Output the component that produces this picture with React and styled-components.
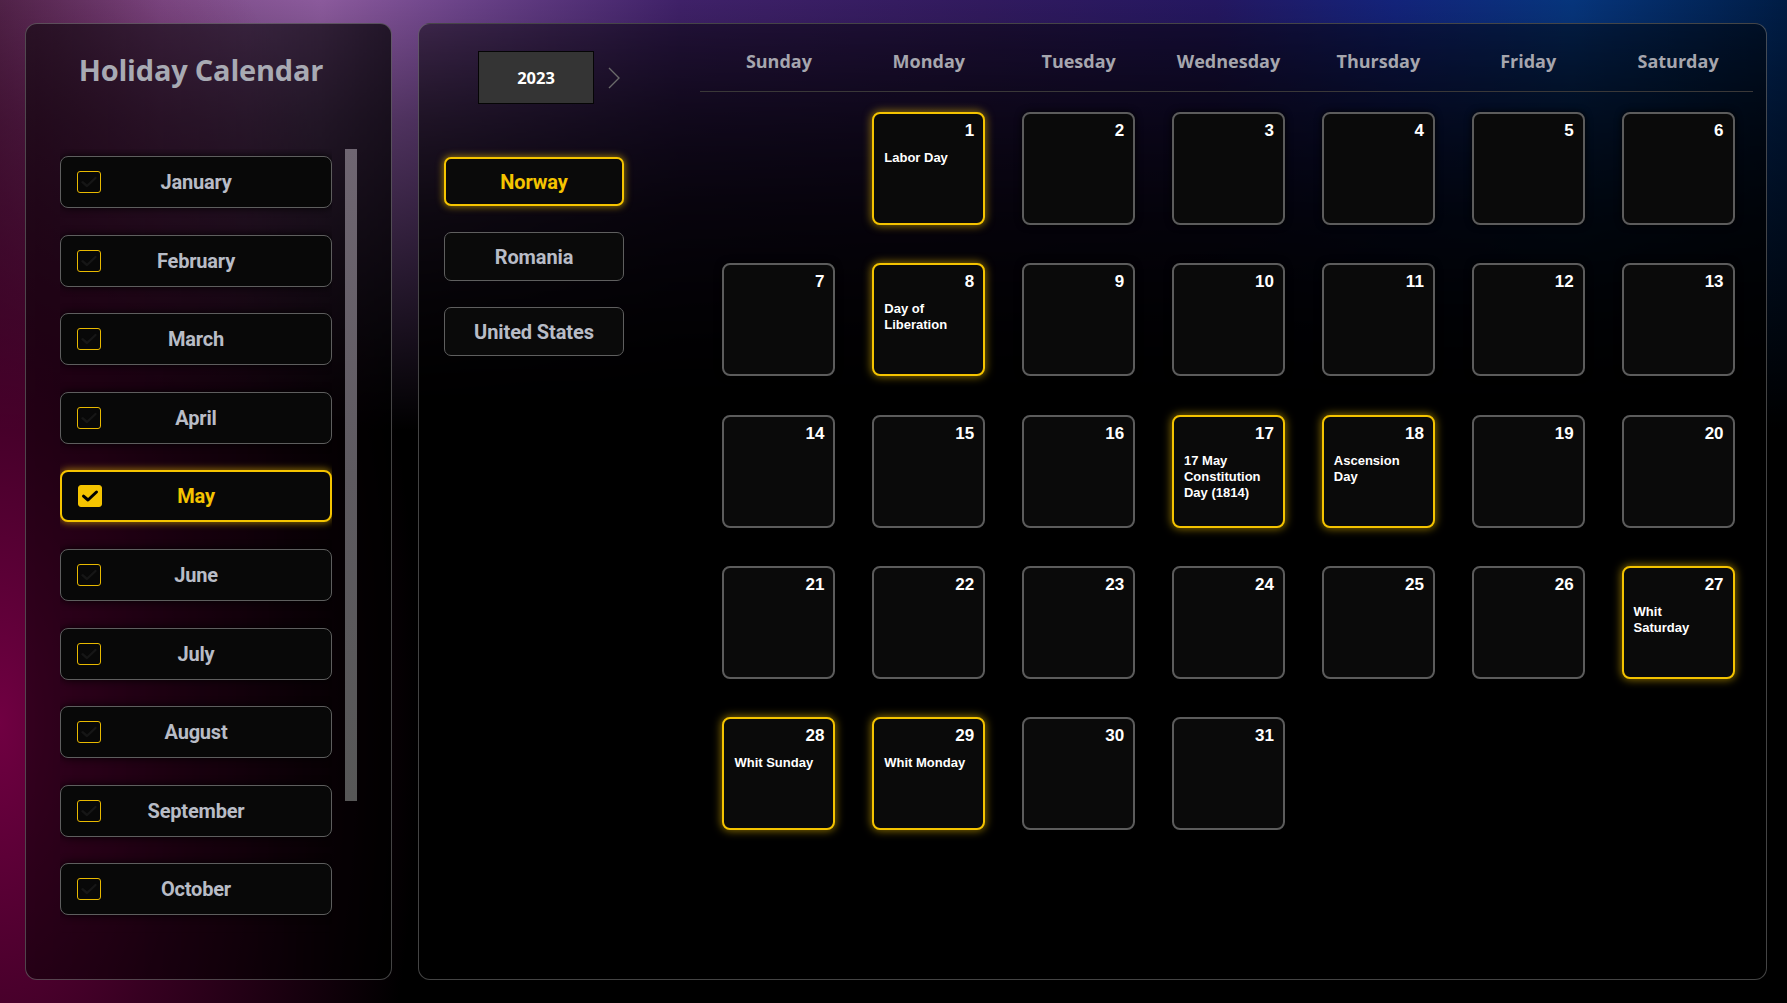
import React from "react";
import styled, { createGlobalStyle, css } from "styled-components";

const MONTHS = [
  "January",
  "February",
  "March",
  "April",
  "May",
  "June",
  "July",
  "August",
  "September",
  "October",
  "November",
  "December",
];

const COUNTRIES = ["Norway", "Romania", "United States"];

const WEEKDAYS = [
  "Sunday",
  "Monday",
  "Tuesday",
  "Wednesday",
  "Thursday",
  "Friday",
  "Saturday",
];

const HOLIDAYS = {
  1: "Labor Day",
  8: "Day of Liberation",
  17: "17 May Constitution Day (1814)",
  18: "Ascension Day",
  27: "Whit Saturday",
  28: "Whit Sunday",
  29: "Whit Monday",
};

// May 2023 starts on a Monday
const FIRST_WEEKDAY = 1;
const DAYS_IN_MONTH = 31;

function CheckMark({ checked }) {
  return (
    <svg width="18" height="14" viewBox="0 0 18 14">
      <path
        d="M2.5 7.2 L7 11 L15.5 3"
        fill="none"
        stroke={checked ? "#000" : "#161616"}
        strokeWidth={checked ? 3 : 2.4}
        strokeLinecap="round"
        strokeLinejoin="round"
      />
    </svg>
  );
}

function App() {
  const cells = [];
  for (let i = 0; i < FIRST_WEEKDAY; i++) cells.push(null);
  for (let d = 1; d <= DAYS_IN_MONTH; d++) cells.push(d);

  return (
    <>
      <GlobalStyle />
      <Page>
        <SidePanel>
          <Title>Holiday Calendar</Title>
          <MonthArea>
            <MonthList>
              {MONTHS.map((m) => {
                const active = m === "May";
                return (
                  <MonthButton key={m} $active={active}>
                    <CheckBox $checked={active}>
                      <CheckMark checked={active} />
                    </CheckBox>
                    <MonthLabel $active={active}>{m}</MonthLabel>
                  </MonthButton>
                );
              })}
            </MonthList>
            <ScrollTrack>
              <ScrollThumb />
            </ScrollTrack>
          </MonthArea>
        </SidePanel>

        <MainPanel>
          <FilterColumn>
            <YearRow>
              <YearBox>2023</YearBox>
              <svg width="14" height="24" viewBox="0 0 14 24">
                <path
                  d="M2 2 L12 12 L2 22"
                  fill="none"
                  stroke="#6b6b6b"
                  strokeWidth="1.4"
                />
              </svg>
            </YearRow>
            <CountryList>
              {COUNTRIES.map((c) => (
                <CountryButton key={c} $active={c === "Norway"}>
                  {c}
                </CountryButton>
              ))}
            </CountryList>
          </FilterColumn>

          <Calendar>
            <WeekHeader>
              {WEEKDAYS.map((w) => (
                <WeekDay key={w}>{w}</WeekDay>
              ))}
            </WeekHeader>
            <DayGrid>
              {cells.map((d, i) =>
                d === null ? (
                  <EmptyCell key={"e" + i} />
                ) : (
                  <DayCell key={d} $holiday={!!HOLIDAYS[d]}>
                    <DayNumber>{d}</DayNumber>
                    {HOLIDAYS[d] && <HolidayName>{HOLIDAYS[d]}</HolidayName>}
                  </DayCell>
                )
              )}
            </DayGrid>
          </Calendar>
        </MainPanel>
      </Page>
    </>
  );
}

//============================== Styles ======================================//

const GlobalStyle = createGlobalStyle`
  html, body {
    margin: 0;
    padding: 0;
    background: #000;
  }
  * {
    box-sizing: border-box;
  }
`;

const Page = styled.div`
  width: 1787px;
  height: 1003px;
  overflow: hidden;
  display: flex;
  gap: 26px;
  padding: 23px 20px 23px 25px;
  font-family: "Open Sans", "Liberation Sans", sans-serif;
  background:
    radial-gradient(ellipse 420px 900px at 0% 72%, rgba(112, 0, 66, 1) 0%, rgba(100, 0, 60, 0.55) 45%, rgba(0, 0, 0, 0) 100%),
    linear-gradient(to bottom, rgba(0, 0, 0, 0) 0px, rgba(0, 0, 0, 0.35) 120px, rgba(0, 0, 0, 1) 430px),
    linear-gradient(
      to right,
      #4b2a4a 0%,
      #7c4c86 9%,
      #8b5a9c 18%,
      #6a4288 26%,
      #3f2168 38%,
      #311a5e 55%,
      #241760 68%,
      #13237a 78%,
      #06357c 88%,
      #001c44 100%
    );
`;

const Panel = styled.div`
  height: 957px;
  border-radius: 12px;
  border: 1px solid rgba(150, 150, 150, 0.45);
  background: rgba(0, 0, 0, 0.55);
`;

const SidePanel = styled(Panel)`
  width: 367px;
  flex-shrink: 0;
  padding: 26px 0 0 34px;
  background: linear-gradient(
    to right,
    rgba(0, 0, 0, 0.5) 0%,
    rgba(0, 0, 0, 0.55) 60%,
    rgba(0, 0, 0, 0.7) 100%
  );
`;

const Title = styled.h1`
  margin: 0;
  width: 282px;
  text-align: center;
  font-family: "Open Sans", "Liberation Sans", sans-serif;
  font-weight: 700;
  font-size: 29px;
  line-height: 40px;
  letter-spacing: -0.2px;
  color: #a8aab3;
`;

const MonthArea = styled.div`
  margin-top: 59px;
  display: flex;
  gap: 13px;
`;

const MonthList = styled.div`
  width: 272px;
  height: 784px;
  overflow: hidden;
  padding-top: 7px;
  display: flex;
  flex-direction: column;
  gap: 26.6px;
`;

const MonthButton = styled.div`
  flex-shrink: 0;
  height: 52px;
  border-radius: 8px;
  background: #080808;
  border: 1.5px solid #5e5e5e;
  box-shadow: 0 0 8px rgba(0, 0, 0, 0.9);
  display: grid;
  grid-template-columns: 1fr auto 1fr;
  align-items: center;
  padding: 0 16px;
  ${(p) =>
    p.$active &&
    css`
      border: 2px solid #f5c400;
      box-shadow: 0 0 7px 1px rgba(245, 196, 0, 0.55);
      padding: 0 15.5px;
    `}
`;

const CheckBox = styled.div`
  justify-self: start;
  width: 24px;
  height: 22px;
  border-radius: 3px;
  border: 1.5px solid #e8b900;
  display: flex;
  align-items: center;
  justify-content: center;
  ${(p) =>
    p.$checked &&
    css`
      background: #f5c400;
      border-color: #f5c400;
    `}
`;

const MonthLabel = styled.span`
  font-family: Roboto, "Liberation Sans", sans-serif;
  font-weight: 700;
  font-size: 20px;
  letter-spacing: -0.2px;
  color: ${(p) => (p.$active ? "#f5c400" : "#b8bcc6")};
`;

const ScrollTrack = styled.div`
  width: 12px;
  height: 784px;
`;

const ScrollThumb = styled.div`
  width: 12px;
  height: 652px;
  background: linear-gradient(to bottom, #6f6672 0%, #5e5a60 50%, #575757 100%);
`;

const MainPanel = styled(Panel)`
  flex: 1;
  display: flex;
  background: linear-gradient(
    to bottom,
    rgba(0, 0, 0, 0.45) 0px,
    rgba(0, 0, 0, 0.75) 200px,
    rgba(0, 0, 0, 0.95) 420px
  );
`;

const FilterColumn = styled.div`
  width: 281px;
  flex-shrink: 0;
  padding-top: 27px;
`;

const YearRow = styled.div`
  display: flex;
  align-items: center;
  gap: 13px;
  margin-left: 59px;
`;

const YearBox = styled.div`
  width: 116px;
  height: 53px;
  background: #343434;
  border: 1px solid #050505;
  display: flex;
  align-items: center;
  justify-content: center;
  font-family: "Open Sans", "Liberation Sans", sans-serif;
  font-weight: 700;
  font-size: 16.5px;
  color: #ffffff;
`;

const CountryList = styled.div`
  margin: 53px 0 0 25px;
  display: flex;
  flex-direction: column;
  gap: 26px;
`;

const CountryButton = styled.div`
  width: 180px;
  height: 49px;
  border-radius: 7px;
  background: #0a0a0a;
  border: 1.5px solid #5f5f5f;
  display: flex;
  align-items: center;
  justify-content: center;
  font-family: Roboto, "Liberation Sans", sans-serif;
  font-weight: 700;
  font-size: 20px;
  letter-spacing: -0.1px;
  color: #b8bcc6;
  ${(p) =>
    p.$active &&
    css`
      border: 2px solid #f5c400;
      color: #f5c400;
      box-shadow: 0 0 7px 1px rgba(245, 196, 0, 0.55);
    `}
`;

const Calendar = styled.div`
  width: 1053px;
`;

const WeekHeader = styled.div`
  height: 68px;
  padding: 7px 0 0 4px;
  display: grid;
  grid-template-columns: repeat(7, 1fr);
  align-items: center;
  border-bottom: 1px solid #3a3838;
`;

const WeekDay = styled.div`
  text-align: center;
  font-family: "Open Sans", "Liberation Sans", sans-serif;
  font-weight: 700;
  font-size: 18px;
  color: #a6a6ae;
`;

const DayGrid = styled.div`
  padding: 20px 0 0 4px;
  display: grid;
  grid-template-columns: repeat(7, 1fr);
  grid-auto-rows: 113px;
  row-gap: 38.3px;
  justify-items: center;
`;

const EmptyCell = styled.div``;

const DayCell = styled.div`
  width: 113px;
  height: 113px;
  border-radius: 8px;
  background: #0a0a0a;
  border: 2px solid #5c5c5c;
  box-shadow: 0 0 7px rgba(0, 0, 0, 0.9);
  padding: 7px 9px 0 10px;
  display: flex;
  flex-direction: column;
  font-family: "Liberation Sans", Arial, sans-serif;
  color: #ffffff;
  ${(p) =>
    p.$holiday &&
    css`
      border-color: #f4c300;
      box-shadow: 0 0 8px 1px rgba(244, 195, 0, 0.55);
    `}
`;

const DayNumber = styled.div`
  align-self: flex-end;
  font-weight: 700;
  font-size: 17px;
  line-height: 20px;
`;

const HolidayName = styled.div`
  margin-top: 9px;
  max-width: 85px;
  font-weight: 700;
  font-size: 13px;
  line-height: 16px;
`;

export default App;
